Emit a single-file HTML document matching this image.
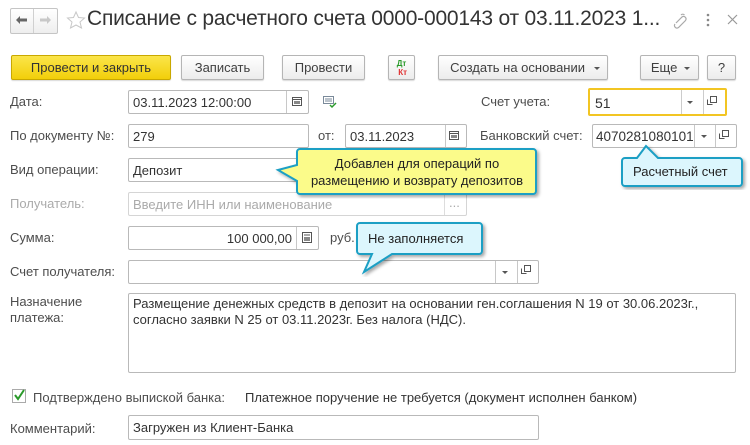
<!DOCTYPE html>
<html><head><meta charset="utf-8"><style>
*{box-sizing:border-box;margin:0;padding:0}
body{width:750px;height:445px;background:#fff;position:relative;overflow:hidden;font-family:"Liberation Sans",Arial,sans-serif;font-size:13px;color:#333}
.a{position:absolute;white-space:nowrap}
.lbl{position:absolute;color:#4d4d4d;font-size:13px}
.in{position:absolute;border:1px solid #b9b9b9;border-radius:2px;background:#fff;height:24px;padding:4px 0 0 4px;font-size:13px;color:#333;white-space:nowrap;overflow:hidden}
.btn{position:absolute;top:55px;height:25px;border:1px solid #b5b5b5;border-radius:2px;background:linear-gradient(#fff,#ececec);box-shadow:0 1px 1px rgba(0,0,0,.15);text-align:center;line-height:23px;color:#404040}
.sep{position:absolute;top:0;bottom:0;border-left:1px solid #c8c8c8}
.tri{position:absolute;width:0;height:0;border-left:3px solid transparent;border-right:3px solid transparent;border-top:3px solid #555}
</style></head><body>
<!-- header -->
<div class="a" style="left:10px;top:8px;width:48px;height:26px;border:1px solid #c5c5c5;border-radius:2px;background:linear-gradient(#fff,#eee)"></div>
<div class="a" style="left:33px;top:9px;height:24px;border-left:1px solid #d0d0d0"></div>
<svg class="a" style="left:0;top:0" width="750" height="40">
<path d="M16 20 L20 16 V18.5 H27 V21.5 H20 V24 Z" fill="#666"/>
<path d="M51 20 L47 16 V18.5 H40 V21.5 H47 V24 Z" fill="#c8c8c8"/>
<path d="M76 12 L78.5 17.5 L84.5 18 L80 22 L81.5 28 L76 25 L70.5 28 L72 22 L67.5 18 L73.5 17.5 Z" fill="none" stroke="#c8c8c8" stroke-width="1"/>
<path d="M676 23 l6 -6 a2.5 2.5 0 0 1 3.5 3.5 l-7 7 a2.5 2.5 0 0 1 -3.5 -3.5 M681 15 a2.5 2.5 0 0 1 3.5 0" fill="none" stroke="#aaa" stroke-width="1.2"/>
<circle cx="708" cy="15" r="1.3" fill="#888"/><circle cx="708" cy="20" r="1.3" fill="#888"/><circle cx="708" cy="25" r="1.3" fill="#888"/>
<path d="M728 15 L737 24 M737 15 L728 24" stroke="#999" stroke-width="1.2"/>
</svg>
<div class="a" style="left:87px;top:7px;font-size:21px;color:#333;letter-spacing:-0.2px">Списание с расчетного счета 0000-000143 от 03.11.2023 1...</div>
<!-- toolbar -->
<div class="btn" style="left:11px;width:160px;background:linear-gradient(#fbe54a,#f2cf0a);border-color:#c9a800;color:#333">Провести и закрыть</div>
<div class="btn" style="left:181px;width:83px">Записать</div>
<div class="btn" style="left:282px;width:83px">Провести</div>
<div class="btn" style="left:388px;width:27px;line-height:9px;font-size:8px;font-weight:bold;padding-top:3px"><span style="color:#2a9a2a">Дт</span><br><span style="color:#e03030">&nbsp;Кт</span></div>
<div class="btn" style="left:438px;width:170px">Создать на основании &nbsp;&nbsp;</div>
<div class="tri" style="left:594px;top:67px"></div>
<div class="btn" style="left:640px;width:59px">Еще &nbsp;&nbsp;</div>
<div class="tri" style="left:684px;top:67px"></div>
<div class="btn" style="left:707px;width:29px">?</div>
<!-- labels -->
<div class="lbl" style="left:10px;top:94px">Дата:</div>
<div class="lbl" style="left:10px;top:128px">По документу №:</div>
<div class="lbl" style="left:10px;top:162px">Вид операции:</div>
<div class="lbl" style="left:10px;top:196px;color:#aaa">Получатель:</div>
<div class="lbl" style="left:10px;top:230px">Сумма:</div>
<div class="lbl" style="left:10px;top:264px">Счет получателя:</div>
<div class="lbl" style="left:10px;top:294px;line-height:16px">Назначение<br>платежа:</div>
<div class="lbl" style="left:10px;top:421px">Комментарий:</div>
<div class="lbl" style="left:318px;top:128px">от:</div>
<div class="lbl" style="left:481px;top:94px">Счет учета:</div>
<div class="lbl" style="left:480px;top:128px">Банковский счет:</div>
<div class="lbl" style="left:330px;top:230px">руб.</div>
<!-- inputs -->
<div class="in" style="left:128px;top:90px;width:181px">03.11.2023 12:00:00<div class="sep" style="left:157px"></div></div>
<div class="in" style="left:128px;top:124px;width:181px">279</div>
<div class="in" style="left:345px;top:124px;width:122px">03.11.2023<div class="sep" style="left:99px"></div></div>
<div class="in" style="left:128px;top:158px;width:181px">Депозит</div>
<div class="in" style="left:128px;top:192px;width:339px;color:#aaa;border-color:#d5d5d5">Введите ИНН или наименование<div class="sep" style="left:315px;border-color:#ddd"></div><span class="a" style="left:320px;top:2px;color:#aaa">...</span></div>
<div class="in" style="left:128px;top:226px;width:191px;text-align:right;padding-right:26px">100 000,00<div class="sep" style="left:167px"></div></div>
<div class="in" style="left:128px;top:260px;width:411px"><div class="sep" style="left:366px"></div><div class="sep" style="left:388px"></div></div>
<div class="tri" style="left:502px;top:271px"></div>
<div class="in" style="left:128px;top:293px;width:608px;height:80px;padding:2px 0 0 4px;line-height:16px">Размещение денежных средств в депозит на основании ген.соглашения N 19 от 30.06.2023г.,<br>согласно заявки N 25 от 03.11.2023г. Без налога (НДС).</div>
<div class="in" style="left:128px;top:415px;width:411px;height:25px">Загружен из Клиент-Банка</div>
<div class="in" style="left:588px;top:88px;width:139px;height:28px;border:2px solid #f2c523;padding:5px 0 0 5px;font-size:14px">51<div class="sep" style="left:91px;border-color:#ccc"></div><div class="sep" style="left:113px;border-color:#ccc"></div></div>
<div class="tri" style="left:687px;top:101px"></div>
<div class="in" style="left:592px;top:124px;width:145px;font-size:13.5px;padding-left:3px">4070281080101<div class="sep" style="left:101px"></div><div class="sep" style="left:122px"></div></div>
<div class="tri" style="left:701px;top:135px"></div>
<!-- small icons -->
<svg class="a" style="left:0;top:0" width="750" height="445">
<g fill="none" stroke="#555" stroke-width="1">
<rect x="292.5" y="97.5" width="9" height="8"/><path d="M292.5 99.5h9"/>
<rect x="449.5" y="131.5" width="9" height="8"/><path d="M449.5 133.5h9"/>
<rect x="302.5" y="232.5" width="9" height="10"/><path d="M304 235h6"/>
<rect x="524.5" y="265.5" width="6" height="6"/><path d="M521.5 268.5v5h5"/>
<rect x="710.5" y="96.5" width="6" height="6"/><path d="M707.5 99.5v5h5"/>
<rect x="722.5" y="130.5" width="6" height="6"/><path d="M719.5 133.5v5h5"/>
</g>
<g fill="#888"><rect x="294" y="101" width="6" height="3"/><rect x="451" y="135" width="6" height="3"/><rect x="304" y="237" width="6" height="4"/></g>
<path d="M323.5 96.5h10v7h-10z M325 99h7 M325 101h7" fill="none" stroke="#7a8a9a"/>
<path d="M330 105l2 2 4-4" fill="none" stroke="#2a9a2a" stroke-width="1.5"/>
<rect x="12.5" y="389.5" width="13" height="13" fill="#fff" stroke="#aaa"/>
<path d="M15 395l3 4 6-9" fill="none" stroke="#2a9a2a" stroke-width="2"/>
<defs><filter id="sh"><feDropShadow dx="2" dy="2" stdDeviation="1.5" flood-opacity="0.35"/></filter></defs>
<path d="M300 149h233a3 3 0 0 1 3 3v39a3 3 0 0 1-3 3h-233a3 3 0 0 1-3-3v-10l-19-11 19-5v-13a3 3 0 0 1 3-3z" fill="#fbfb8a" stroke="#1a9fc4" stroke-width="2" filter="url(#sh)"/>
<path d="M360 223h119a3 3 0 0 1 3 3v25a3 3 0 0 1-3 3h-87l-28 18 8-18h-12a3 3 0 0 1-3-3v-25a3 3 0 0 1 3-3z" fill="#dcf6fd" stroke="#1a9fc4" stroke-width="2" filter="url(#sh)"/>
<path d="M625 158h12l9-12 12 12h81a3 3 0 0 1 3 3v22a3 3 0 0 1-3 3h-114a3 3 0 0 1-3-3v-22a3 3 0 0 1 3-3z" fill="#dcf6fd" stroke="#1a9fc4" stroke-width="2" filter="url(#sh)"/>
</svg>
<div class="a" style="left:298px;top:155px;width:238px;text-align:center;line-height:17px;color:#222">Добавлен для операций по<br>размещению и возврату депозитов</div>
<div class="a" style="left:368px;top:231px;color:#222">Не заполняется</div>
<div class="a" style="left:633px;top:164px;color:#222">Расчетный счет</div>
<div class="lbl" style="left:33px;top:390px">Подтверждено выпиской банка:</div>
<div class="lbl" style="left:245px;top:390px;color:#333">Платежное поручение не требуется (документ исполнен банком)</div>
</body></html>
